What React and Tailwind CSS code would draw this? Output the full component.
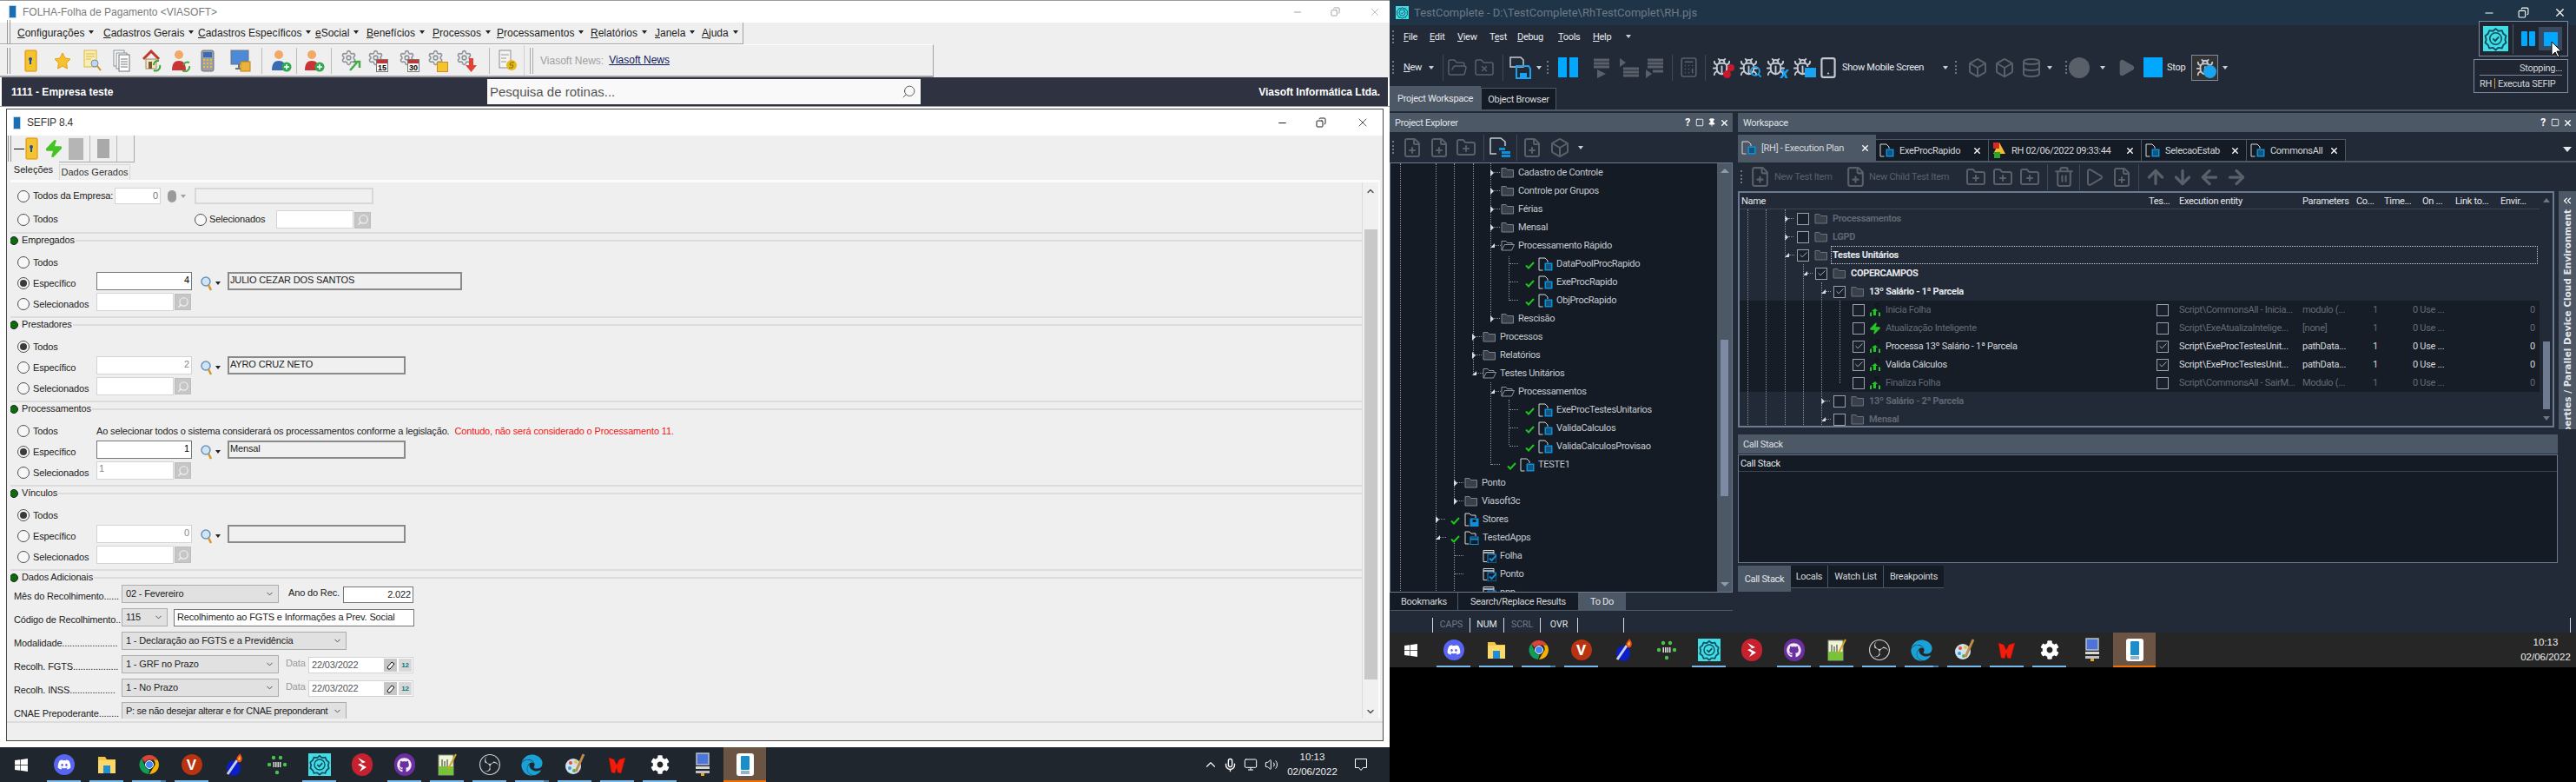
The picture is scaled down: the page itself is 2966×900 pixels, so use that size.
import React from 'react'
import { FaWindows, FaDiscord, FaGithub, FaCog, FaEdge } from 'react-icons/fa'
import { SiObsstudio } from 'react-icons/si'
import {
  FolderOpen, FolderX, Play, Calculator, Bug, Smartphone, Box, Database, Trash2, ArrowUp, ArrowDown, ArrowLeft, ArrowRight,
  Search, Mic, Volume2, ChevronUp, ChevronDown, ChevronsLeft, X, Minus, Copy, Square, Pin, Zap, Settings, Check, FilePlus, FolderPlus, Monitor,
} from 'lucide-react'

const leftFont = "[font-family:'Liberation_Sans',sans-serif]"
const rightFont = "[font-family:'Roboto',sans-serif]"

// ---------- left window bits

function Door() {
  return (
    <svg width="16" height="26" viewBox="0 0 16 26">
      <rect x="1" y="1" width="13" height="24" rx="1" fill="#f4c430" stroke="#e08a00" />
      <circle cx="7" cy="11" r="2" fill="#1c4fa0" />
      <rect x="6" y="11" width="2" height="6" fill="#1c4fa0" />
    </svg>
  )
}

function Star() {
  return (
    <svg width="20" height="20" viewBox="0 0 20 20">
      <path d="M10 1l3 6 6 1-4.500 4.500 1 6.500-5.500-3-5.500 3 1-6.500L1 8l6-1z" fill="#f6c229" stroke="#e89a10" />
    </svg>
  )
}

function DocSearch() {
  return (
    <svg width="22" height="26" viewBox="0 0 22 26">
      <rect x="1" y="1" width="14" height="19" fill="#f9efb0" stroke="#d9b84a" />
      <path d="M3 5h10M3 8h10M3 11h6" stroke="#d9b84a" />
      <circle cx="13" cy="16" r="4" fill="#bcd8f2" stroke="#7c8da0" />
      <path d="M16 19l4 5" stroke="#d08a20" strokeWidth="2" />
    </svg>
  )
}

function Docs() {
  return (
    <svg width="20" height="26" viewBox="0 0 20 26">
      <rect x="1" y="1" width="12" height="18" fill="#fff" stroke="#8a8f96" />
      <rect x="4" y="4" width="12" height="18" fill="#fff" stroke="#8a8f96" />
      <rect x="7" y="6" width="12" height="19" fill="#fff" stroke="#6f747a" />
      <path d="M9 11h8M9 14h8M9 17h8M9 20h8" stroke="#777" />
    </svg>
  )
}

function House() {
  return (
    <svg width="22" height="26" viewBox="0 0 22 26">
      <path d="M1 11L10 2l9 9" fill="none" stroke="#c0392b" strokeWidth="3" />
      <rect x="4" y="11" width="12" height="11" fill="#f3e4c4" stroke="#a08a60" />
      <rect x="7" y="14" width="4" height="8" fill="#7a5a2c" />
      <path d="M13 24a5 5 0 0 0 7-6M19 13a5 5 0 0 0-6 5" fill="none" stroke="#36a836" strokeWidth="2" />
    </svg>
  )
}

function Person({ badge }) {
  return (
    <svg width="24" height="26" viewBox="0 0 24 26">
      <circle cx="9" cy="6" r="5" fill="#f2a866" />
      <path d="M1 24c0-8 3-11 8-11s8 3 8 11z" fill={badge === 'blue' ? '#3c6ab0' : '#c93333'} />
      {badge === 'swap' && <path d="M13 24a5 5 0 0 0 8-5M21 15a5 5 0 0 0-7 3" fill="none" stroke="#4ca83c" strokeWidth="2" />}
      {badge && badge !== 'swap' && <circle cx="18" cy="20" r="5.500" fill="#2fa84f" />}
      {badge && badge !== 'swap' && <path d="M18 17v6M15 20h6" stroke="#fff" strokeWidth="1.500" />}
    </svg>
  )
}

function Calc() {
  return (
    <svg width="16" height="26" viewBox="0 0 16 26">
      <rect x="1" y="1" width="14" height="24" rx="2" fill="#9aa0a8" stroke="#6c727a" />
      <rect x="3" y="3" width="10" height="6" fill="#3c6ab0" />
      <path d="M3 12h2M7 12h2M11 12h2M3 16h2M7 16h2M11 16h2M3 20h2M7 20h2M11 20h2" stroke="#f0b93a" strokeWidth="2" />
    </svg>
  )
}

function ScreenLock() {
  return (
    <svg width="24" height="26" viewBox="0 0 24 26">
      <rect x="1" y="1" width="20" height="16" fill="#4c8ad8" stroke="#6c727a" />
      <path d="M6 22h8M10 17v5" stroke="#6c727a" strokeWidth="2" />
      <rect x="12" y="14" width="11" height="11" fill="#eeb23a" stroke="#b98318" />
    </svg>
  )
}

function GearBadge({ children }) {
  return (
    <div className="relative w-[24px] h-[26px]">
      <Settings size={19} strokeWidth={2} className="text-[#8e949b] absolute left-0 top-0" />
      <div className="absolute right-0 bottom-0">{children}</div>
    </div>
  )
}

function Cal({ n }) {
  return (
    <div className="w-[14px] h-[15px] bg-white border border-[#777] flex flex-col items-center">
      <div className="w-full h-[4px] bg-[#c93333] shrink-0" />
      <span className="text-[9px] leading-[10px] font-bold text-black">{n}</span>
    </div>
  )
}

function Radio({ on }) {
  return (
    <span className="w-[14px] h-[14px] rounded-full border border-[#4d4d4d] bg-[#f8f8f8] flex items-center justify-center shrink-0">
      {on && <span className="w-[8px] h-[8px] rounded-full bg-[#3a3a3a]" />}
    </span>
  )
}

function Loupe() {
  return (
    <div className="w-[27px] flex items-center shrink-0 gap-[3px] ml-[6px]">
      <svg width="14" height="18" viewBox="0 0 14 18">
        <circle cx="6" cy="7" r="5" fill="#cfe4f7" stroke="#6d93b8" strokeWidth="1.500" />
        <path d="M9 11l3 6" stroke="#d3972a" strokeWidth="2.500" />
      </svg>
      <span className="w-0 h-0 border-l-[3px] border-r-[3px] border-t-[4px] border-l-transparent border-r-transparent border-t-[#222]" />
    </div>
  )
}

function PickBtn() {
  return (
    <div className="w-[19px] h-[19px] bg-[#c6c6c6] border border-[#bdbdbd] flex items-center justify-center ml-[1px] mt-[1px]">
      <Search size={14} className="text-[#f2f2f2] -scale-x-100" />
    </div>
  )
}

function Label({ children }) {
  return <span className="text-[#222] whitespace-nowrap w-[69px] shrink-0">{children}</span>
}

function NumInput({ value, active }) {
  return (
    <div className={'w-[110px] h-[21px] bg-white border text-right pr-[2px] leading-[17px] -mt-[1px] self-start shrink-0 ' + (active ? 'border-[#777] text-black' : 'border-[#d4d4d4] text-[#888]')}>
      {value}
    </div>
  )
}

function OptionGroup({ title, todos, esp, name, nameW, active, message, selValue }) {
  return (
    <div className="h-[97px] border-t-2 border-[#dcdcdc]">
      <SectionHead title={title} />
      <div className="h-[6px]" />
      <div className="h-6 pl-2 flex items-center gap-1">
        <Radio on={todos} />
        <Label>Todos</Label>
        {message && (
          <span className="whitespace-nowrap text-[#222]">
            Ao selecionar todos o sistema considerará os processamentos conforme a legislação.
            <span className="text-[#f01414] ml-[6px]">Contudo, não será considerado o Processamento 11.</span>
          </span>
        )}
      </div>
      <div className="h-6 pl-2 flex items-center gap-1">
        <Radio on={!todos} />
        <Label>Específico</Label>
        <NumInput value={esp} active={active} />
        <Loupe />
        <div className={'h-[21px] border-2 border-[#8a8a8a] self-start -mt-[1px] pl-[1px] leading-[15px] text-[#222] bg-[#f0f0f0] ' + nameW}>{name}</div>
      </div>
      <div className="h-6 pl-2 flex items-center gap-1">
        <Radio />
        <Label>Selecionados</Label>
        <div className="w-[89px] h-[21px] bg-white border border-[#d4d4d4] -mt-[1px] self-start pl-[2px] leading-[15px] text-[#888]">{selValue}</div>
        <div className="self-start -ml-1 -mt-[1px]"><PickBtn /></div>
      </div>
    </div>
  )
}

function SectionHead({ title }) {
  return (
    <div className="h-[15px] flex items-center -ml-[1px]">
      <span className="w-[10px] h-[10px] rounded-full bg-[#0d6b0d] border border-[#222] shrink-0" />
      <span className="ml-[4px] text-[#222] whitespace-nowrap">{title}</span>
      <div className="h-[2px] bg-[#dcdcdc] flex-1 ml-[1px]" />
    </div>
  )
}

function Select({ w, tight, children }) {
  return (
    <div className={'h-[21px] bg-[#e1e1e1] border border-[#adadad] flex items-center pl-[4px] pr-[4px] justify-between shrink-0 text-[#222] ' + w}>
      <span className={'whitespace-nowrap ' + (tight ? 'tracking-[-0.3px]' : '')}>{children}</span>
      <ChevronDown size={11} className="text-[#444] shrink-0 ml-[2px]" />
    </div>
  )
}

function DataRow({ label, children }) {
  return (
    <div className="h-[27px] flex items-start pl-[4px]">
      <span className="w-[124px] shrink-0 whitespace-nowrap text-[#222] mt-[8px]">{label}</span>
      {children}
    </div>
  )
}

function DateField() {
  return (
    <>
      <span className="ml-[8px] w-[26px] shrink-0 text-[#9a9a9a] mt-[4px]">Data</span>
      <div className="w-[121px] h-[19px] bg-white border border-[#d4d4d4] mt-[2px] flex items-center pl-[3px] text-[#555]">
        <span className="flex-1">22/03/2022</span>
        <span className="w-[15px] h-[15px] bg-[#c6c6c6] flex items-center justify-center mr-[2px]">
          <svg width="10" height="10" viewBox="0 0 10 10"><path d="M1 7l5-6 3 2-5 6H2z" fill="#fff" stroke="#111" /></svg>
        </span>
        <span className="w-[15px] h-[15px] bg-[#d8d8d8] flex items-center justify-center text-[8px] text-[#0a7a7a] font-bold mr-[1px]">12</span>
      </div>
    </>
  )
}

function MenuArrow() {
  return <span className="inline-block ml-[5px] mb-[3px] w-0 h-0 border-l-[3px] border-r-[3px] border-t-[4px] border-l-transparent border-r-transparent border-t-[#222]" />
}

const mainMenu = [
  ['C', 'onfigurações', 'w-[99px]'],
  ['C', 'adastros Gerais', 'w-[109px]'],
  ['C', 'adastros Específicos', 'w-[135px]'],
  ['e', 'Social', 'w-[59px]'],
  ['B', 'enefícios', 'w-[76px]'],
  ['P', 'rocessos', 'w-[74px]'],
  ['P', 'rocessamentos', 'w-[108px]'],
  ['R', 'elatórios', 'w-[74px]'],
  ['J', 'anela', 'w-[54px]'],
  ['A', 'juda', 'w-[46px]'],
]

function Grip({ light }) {
  return (
    <div className="flex gap-[1px] h-[30px] shrink-0">
      <span className={'w-[2px] h-full border-l ' + (light ? 'border-[#aaa]' : 'border-[#999]')} />
      <span className={'w-[2px] h-full border-l ' + (light ? 'border-[#aaa]' : 'border-[#999]')} />
    </div>
  )
}

function ToolSep() {
  return <span className="w-px h-[30px] bg-[#bbb] shrink-0 block" />
}

function TaskIcon({ under, active, split, children }) {
  return (
    <div className={'w-[49px] h-full relative flex items-center justify-center shrink-0 ' + (active ? 'bg-[#6b5443]' : '')}>
      {children}
      {under && <span className="absolute left-[5px] right-[5px] bottom-0 h-[2px] bg-[#76b9ed]" />}
      {split && <span className="absolute right-[5px] bottom-0 w-[6px] h-[2px] bg-[#4a7ea6]" />}
      {active && <span className="absolute left-0 right-0 bottom-0 h-[2px] bg-[#f07000]" />}
    </div>
  )
}

function TcLogo({ size }) {
  return (
    <svg width={size} height={size} viewBox="0 0 28 28" className="shrink-0">
      <rect width="28" height="28" fill="#3fdde6" />
      <path d="M14 3l3 2.500 4-.5 1.500 3.500 3 2.500-1 4 1 3.500-3 2.500-1.500 3.500-4-.5-3 2.500-3-2.500-4 .5L5.500 21l-3-2.500 1-3.500-1-4 3-2.500L7 5l4 .5z" fill="none" stroke="#0f4a5a" strokeWidth="1.800" />
      <circle cx="14" cy="14" r="6.500" fill="none" stroke="#0f4a5a" strokeWidth="1.500" />
      <path d="M11 14l2.500 2.500L17.500 12" fill="none" stroke="#0f4a5a" strokeWidth="1.800" />
    </svg>
  )
}

function TaskbarIcons() {
  return (
    <>
      <TaskIcon><FaWindows size={17} className="text-white" /></TaskIcon>
      <TaskIcon under>
        <span className="w-[24px] h-[24px] rounded-full bg-[#5865f2] flex items-center justify-center"><FaDiscord size={16} className="text-white" /></span>
      </TaskIcon>
      <TaskIcon under>
        <svg width="22" height="24" viewBox="0 0 22 24">
          <path d="M1 3h8l2 3h10v16H1z" fill="#f5c342" />
          <rect x="1" y="7" width="20" height="15" fill="#fbd867" />
          <rect x="7" y="13" width="8" height="9" fill="#1f8fd8" />
        </svg>
      </TaskIcon>
      <TaskIcon under split>
        <svg width="24" height="24" viewBox="0 0 24 24">
          <path d="M12 1a11 11 0 0 1 9.500 5.500H12a5.500 5.500 0 0 0-5 3L3.200 4.800A11 11 0 0 1 12 1z" fill="#db4437" />
          <path d="M21.500 6.500A11 11 0 0 1 12 23l4.700-8a5.500 5.500 0 0 0 0-8.500z" fill="#f4b400" />
          <path d="M3.200 4.800L7.500 15a5.500 5.500 0 0 0 5 2.500L11 23A11 11 0 0 1 3.200 4.800z" fill="#0f9d58" />
          <circle cx="12" cy="12" r="4.500" fill="#4285f4" stroke="#fff" />
        </svg>
      </TaskIcon>
      <TaskIcon under>
        <span className="w-[24px] h-[24px] rounded-full bg-[#b8330f] flex items-center justify-center text-white font-bold text-[17px] leading-none">V</span>
      </TaskIcon>
      <TaskIcon>
        <svg width="24" height="26" viewBox="0 0 24 26">
          <ellipse cx="11" cy="17" rx="8" ry="9" fill="#0a1fc9" />
          <path d="M4 24L15 8" stroke="#c9d1e6" strokeWidth="3" />
          <path d="M15 8c-2-4 2-5 3-8 2 3 4 5 2 9-1 2-4 2-5-1z" fill="#f04a1c" />
          <path d="M16 7c0-2 2-3 2-4 1 2 1 4 0 5z" fill="#fbd03c" />
        </svg>
      </TaskIcon>
      <TaskIcon>
        <svg width="24" height="24" viewBox="0 0 24 24">
          <circle cx="8" cy="4" r="2.200" fill="#4ac14a" />
          <circle cx="16" cy="4" r="2.200" fill="#4ac14a" />
          <circle cx="3" cy="12" r="2.200" fill="#4ac14a" />
          <circle cx="21" cy="12" r="2.200" fill="#4ac14a" />
          <circle cx="12" cy="21" r="2.200" fill="#4ac14a" />
          <rect x="7.500" y="9" width="9" height="6" fill="#d9d9d9" />
          <path d="M9.500 9v6M12 9v6M14.500 9v6" stroke="#333" />
        </svg>
      </TaskIcon>
      <TaskIcon under><TcLogo size={26} /></TaskIcon>
      <TaskIcon>
        <span className="w-[24px] h-[26px] rounded-full bg-[#c7202f] flex items-center justify-center">
          <svg width="14" height="20" viewBox="0 0 14 20"><path d="M2 2l9 5-6 2 7 4-8 5 3-5-5-3 5-2z" fill="#fff" /></svg>
        </span>
      </TaskIcon>
      <TaskIcon under>
        <span className="w-[24px] h-[26px] rounded-full bg-[#6b2fa0] flex items-center justify-center"><FaGithub size={17} className="text-[#f2eaf8]" /></span>
      </TaskIcon>
      <TaskIcon under>
        <svg width="22" height="26" viewBox="0 0 22 26">
          <rect x="1" y="2" width="17" height="23" fill="#eef4d6" stroke="#8a8f7a" />
          <rect x="1" y="15" width="17" height="10" fill="#77c43a" />
          <path d="M5 7v8M8 9v6M11 7v8" stroke="#333" />
          <path d="M21 1L12 18" stroke="#d3a52a" strokeWidth="2" />
        </svg>
      </TaskIcon>
      <TaskIcon under><SiObsstudio size={24} className="text-[#d4d4d4]" /></TaskIcon>
      <TaskIcon under split><FaEdge size={25} className="text-[#1aa2d8]" /></TaskIcon>
      <TaskIcon under>
        <svg width="24" height="26" viewBox="0 0 24 26">
          <ellipse cx="10" cy="15" rx="9" ry="9" fill="#cfe2ee" />
          <circle cx="7" cy="11" r="2" fill="#e64b3c" />
          <circle cx="13" cy="10" r="2" fill="#f0c030" />
          <circle cx="6" cy="17" r="2" fill="#3a9ad9" />
          <circle cx="11" cy="20" r="2" fill="#4cb050" />
          <path d="M22 1L13 21" stroke="#c08a4a" strokeWidth="3" />
        </svg>
      </TaskIcon>
      <TaskIcon under>
        <svg width="24" height="24" viewBox="0 0 24 24"><path d="M2 4l6 2 3 6 3-6 7-2-5 18-4-1-1-5-2 6-4-1z" fill="#f01c0c" stroke="#a50d05" strokeWidth=".5" /></svg>
      </TaskIcon>
      <TaskIcon under><FaCog size={22} className="text-white" /></TaskIcon>
      <TaskIcon>
        <svg width="20" height="28" viewBox="0 0 20 28">
          <rect x="3" y="1" width="14" height="13" fill="#4d74d8" stroke="#b8c0cc" strokeWidth="1.500" />
          <rect x="2" y="16" width="16" height="3" fill="#d8d8d8" />
          <rect x="2" y="21" width="16" height="3" fill="#c0c0c0" />
          <rect x="8" y="24" width="4" height="3" fill="#e9a721" />
        </svg>
      </TaskIcon>
      <TaskIcon active>
        <span className="w-[20px] h-[26px] rounded-[3px] bg-white flex flex-col items-center justify-center">
          <span className="w-[10px] h-[16px] bg-[#1b8ec9] rounded-[1px]" />
          <span className="w-[10px] h-[4px] bg-[#8fb5cf] mt-[1px]" />
        </span>
      </TaskIcon>
    </>
  )
}

function LeftWindow() {
  return (
    <div className={'w-[1600px] h-[900px] bg-white flex flex-col shrink-0 text-[11px] leading-none tracking-[-0.15px] ' + leftFont}>
      {/* main title */}
      <div className="h-[26px] border-t border-[#9a9a9a] flex items-center shrink-0 pl-[10px] pr-[10px] tracking-normal">
        <span className="w-[9px] h-[15px] bg-[#1b6fb0] border border-[#b5d6ea] rounded-[1px] shrink-0" />
        <span className="ml-[7px] text-[12px] text-[#7a7a7a]">FOLHA-Folha de Pagamento &lt;VIASOFT&gt;</span>
        <div className="ml-auto flex items-center text-[#a0a0a0]">
          <Minus size={12} className="mr-[32px]" />
          <Copy size={11} className="mr-[33px] -scale-x-100" />
          <X size={14} strokeWidth={1.2} />
        </div>
      </div>

      <div className="h-[25px] bg-[#efefef] shrink-0 flex tracking-normal">
        <div className="w-[856px] h-full border-b border-r border-[#a3a3a3] flex items-center pl-[8px]">
          <Grip />
          <div className="flex items-center ml-[7px] text-[12px] text-[#222]">
            {mainMenu.map(m => (
              <span key={m[1]} className={'whitespace-nowrap shrink-0 ' + m[2]}>
                <span className="underline">{m[0]}</span>{m[1]}<MenuArrow />
              </span>
            ))}
          </div>
        </div>
      </div>

      <div className="h-[38px] bg-[#efefef] shrink-0 flex tracking-normal">
        <div className="w-[1075px] h-full border-t border-white border-b-2 border-b-[#a3a3a3] border-r border-r-[#a3a3a3] flex items-center pl-[8px]">
          <Grip />
          <div className="w-[15px]" />
          <div className="flex items-center">
            <div className="w-[34px]"><Door /></div>
            <div className="w-[34px]"><Star /></div>
            <div className="w-[34px]"><DocSearch /></div>
            <div className="w-[34px]"><Docs /></div>
            <div className="w-[33px]"><House /></div>
            <div className="w-[34px]"><Person badge="swap" /></div>
            <div className="w-[34px]"><Calc /></div>
            <div className="w-[26px]"><ScreenLock /></div>
            <div className="w-[10px]" />
            <ToolSep />
            <div className="w-[39px] pl-[10px]"><Person badge="blue" /></div>
            <ToolSep />
            <div className="w-[39px] pl-[8px]"><Person badge="red" /></div>
            <ToolSep />
            <div className="w-[33px] pl-[10px]"><GearBadge><svg width="14" height="14" viewBox="0 0 14 14"><path d="M1 12L9 3M5 2h7v7" fill="none" stroke="#4aa84a" strokeWidth="2.500" /></svg></GearBadge></div>
            <div className="w-[36px] pl-[8px]"><GearBadge><Cal n="15" /></GearBadge></div>
            <div className="w-[34px] pl-[8px]"><GearBadge><Cal n="30" /></GearBadge></div>
            <div className="w-[34px] pl-[7px]"><GearBadge><span className="block w-[13px] h-[12px] bg-[#f4c430] border border-[#d08a20]" /></GearBadge></div>
            <div className="w-[33px] pl-[6px]"><GearBadge><svg width="13" height="16" viewBox="0 0 13 16"><path d="M4 0h5v8h4l-6.500 8L0 8h4z" fill="#e14334" /></svg></GearBadge></div>
            <div className="w-[11px]" />
            <ToolSep />
            <div className="w-[39px] pl-[10px]">
              <svg width="22" height="26" viewBox="0 0 22 26">
                <rect x="1" y="1" width="13" height="20" fill="#f4f4f4" stroke="#8a8f96" />
                <path d="M3 6h9M3 10h6M3 14h6" stroke="#999" />
                <circle cx="15" cy="18" r="6" fill="#e4bb1a" />
                <path d="M18 15h-4l-1 3h4l-1 3h-4" fill="none" stroke="#8a6a00" />
              </svg>
            </div>
          </div>
          <span className="w-[2px] h-full border-l border-[#d0d0d0]" />
          <div className="ml-[5px]"><Grip light /></div>
          <span className="ml-[7px] text-[12px] text-[#a0a0a0]">Viasoft News:</span>
          <span className="ml-[6px] text-[12px] underline text-[#0c1a5c] -mt-[2px]">Viasoft News</span>
        </div>
      </div>

      {/* company bar */}
      <div className="h-[33px] mx-[2px] bg-[#2f3341] shrink-0 flex items-center relative pl-[11px] pr-[9px] text-white font-bold text-[12px] tracking-normal">
        <span className="w-[548px] shrink-0">1111 - Empresa teste</span>
        <div className="w-[499px] h-[29px] bg-[#f9f9f9] flex items-center px-[3px] justify-between shrink-0">
          <span className="text-[15px] font-normal text-[#555]">Pesquisa de rotinas...</span>
          <Search size={17} strokeWidth={1.200} className="text-[#444] mr-[2px] -scale-x-100" />
        </div>
        <span className="ml-auto">Viasoft Informática Ltda.</span>
      </div>
      <div className="h-[3px] shrink-0 border-t border-[#999]" />

      {/* SEFIP child window */}
      <div className="w-[1586px] h-[728px] ml-[7px] border border-[#4a4a4a] shrink-0 flex flex-col bg-[#efefef]">
        <div className="h-[30px] bg-white flex items-center shrink-0 pl-[7px] pr-[15px]">
          <span className="w-[9px] h-[15px] bg-[#1b6fb0] border border-[#b5d6ea] rounded-[1px] shrink-0" />
          <span className="ml-[7px] text-[12px] text-[#333]">SEFIP 8.4</span>
          <div className="ml-auto flex items-center text-[#222]">
            <Minus size={13} className="mr-[32px]" />
            <Copy size={12} className="mr-[34px] -scale-x-100" />
            <X size={16} strokeWidth={1.200} />
          </div>
        </div>

        {/* form toolbar */}
        <div className="h-[31px] w-[146px] ml-[1px] shrink-0 border-r border-b border-[#a9a9a9] flex items-center">
          <Grip />
          <span className="ml-[2px] w-[12px] h-[6px] border-t border-[#111] mt-[6px]" />
          <div className="ml-[1px]"><Door /></div>
          <Zap size={22} className="ml-[6px] text-[#43c423] fill-[#43c423]" />
          <div className="ml-[6px] w-[17px] h-[25px] bg-[#b5b5b5]" />
          <div className="ml-[7px]"><ToolSep /></div>
          <div className="ml-[8px] w-[14px] h-[22px] bg-[#a9a9a9]" />
          <span className="ml-[8px]"><ToolSep /></span>
        </div>

        {/* tabs */}
        <div className="h-[20px] shrink-0 flex items-end pl-[1px] tracking-normal">
          <div className="w-[59px] h-[21px] bg-[#f0f0f0] flex items-center justify-center text-[#222] pb-[2px] whitespace-nowrap">Seleções</div>
          <div className="w-[82px] h-[18px] border border-b-0 border-[#d8d8d8] flex items-center justify-center text-[#333] whitespace-nowrap">Dados Gerados</div>
        </div>

        {/* frame */}
        <div className="flex-1 min-h-0 mr-[3px] ml-[4px] border-t-[3px] border-t-[#fbfbfb] border-r-2 border-r-[#fbfbfb] flex overflow-hidden">
          <div className="flex-1 min-w-0 flex flex-col bg-[#efefef]">
            <div className="h-[619px] overflow-hidden">
              <div className="h-[57px] pt-[3px]">
                <div className="h-[25px] pl-2 flex items-center gap-1">
                  <Radio />
                  <span className="text-[#222] w-[90px] shrink-0 whitespace-nowrap">Todos da Empresa:</span>
                  <div className="w-[53px] h-[19px] bg-white border border-[#d4d4d4] text-right pr-[2px] leading-[17px] text-[#777] shrink-0">0</div>
                  <div className="ml-[4px] w-[27px] flex items-center gap-[5px]">
                    <span className="w-[10px] h-[14px] bg-[#9a9a9a] rounded-[5px]" />
                    <span className="w-0 h-0 border-l-[3px] border-r-[3px] border-t-[4px] border-l-transparent border-r-transparent border-t-[#a0a0a0]" />
                  </div>
                  <div className="w-[206px] h-[19px] border-2 border-[#d8d8d8] bg-[#f0f0f0]" />
                </div>
                <div className="h-[25px] mt-[2px] pl-2 flex items-center">
                  <Radio />
                  <span className="ml-1 text-[#222] w-[186px] shrink-0">Todos</span>
                  <Radio />
                  <span className="ml-[3px] text-[#222] w-[77px] shrink-0">Selecionados</span>
                  <div className="w-[89px] h-[21px] bg-white border border-[#d4d4d4]" />
                  <PickBtn />
                </div>
              </div>

              <OptionGroup title="Empregados" todos={false} esp="4" active name="JULIO CEZAR DOS SANTOS" nameW="w-[270px]" />
              <OptionGroup title="Prestadores" todos esp="2" name="AYRO CRUZ NETO" nameW="w-[205px]" />
              <OptionGroup title="Processamentos" todos={false} esp="1" active message name="Mensal" nameW="w-[205px]" selValue="1" />
              <OptionGroup title="Vínculos" todos esp="0" name="" nameW="w-[205px]" />

              <div className="border-t-2 border-[#dcdcdc]">
                <SectionHead title="Dados Adicionais" />
                <div className="h-px" />
                <DataRow label="Mês do Recolhimento......">
                  <Select w="w-[181px]">02 - Fevereiro</Select>
                  <span className="ml-[11px] w-[63px] shrink-0 text-[#222] mt-[4px] whitespace-nowrap">Ano do Rec.</span>
                  <div className="w-[81px] h-[19px] bg-white border border-[#777] mt-[2px] text-right pr-[2px] leading-[17px] text-[#222]">2.022</div>
                </DataRow>
                <DataRow label="Código de Recolhimento..">
                  <Select w="w-[53px]">115</Select>
                  <div className="ml-[7px] w-[277px] h-[20px] bg-white border border-[#777] mt-[1px] pl-[3px] leading-[17px] text-[#222] whitespace-nowrap">Recolhimento ao FGTS e Informações a Prev. Social</div>
                </DataRow>
                <DataRow label="Modalidade......................">
                  <Select w="w-[259px]">1 - Declaração ao FGTS e a Previdência</Select>
                </DataRow>
                <DataRow label="Recolh. FGTS..................">
                  <Select w="w-[181px]">1 - GRF no Prazo</Select>
                  <DateField />
                </DataRow>
                <DataRow label="Recolh. INSS..................">
                  <Select w="w-[181px]">1 - No Prazo</Select>
                  <DateField />
                </DataRow>
                <DataRow label="CNAE Prepoderante........">
                  <Select w="w-[259px]" tight>P: se não desejar alterar e for CNAE preponderant</Select>
                </DataRow>
              </div>
            </div>
          </div>
          <div className="w-[19px] border-l border-[#dcdcdc] flex flex-col items-center shrink-0 bg-[#f0f0f0]">
            <div className="h-[54px] w-full flex justify-center pt-[4px]"><ChevronUp size={12} strokeWidth={3} className="text-[#555]" /></div>
            <div className="w-[15px] h-[518px] bg-[#c8c8c8]" />
            <div className="flex-1 w-full flex items-end justify-center pb-[2px]"><ChevronDown size={12} strokeWidth={3} className="text-[#555]" /></div>
          </div>
        </div>
        <div className="h-[22px] shrink-0 border-t-2 border-[#dcdcdc] bg-[#efefef] mt-[3px]" />
      </div>
      <div className="flex-1" />

      {/* taskbar left */}
      <div className="h-[40px] shrink-0 bg-[#1f262e] flex items-center text-white pr-[25px] tracking-normal">
        <TaskbarIcons />
        <div className="ml-auto flex items-center h-full">
          <ChevronUp size={18} strokeWidth={1.500} className="mr-[5px]" />
          <Mic size={17} className="mr-[7px]" />
          <Monitor size={16} strokeWidth={1.500} className="mr-[8px]" />
          <Volume2 size={16} strokeWidth={1.500} />
          <div className="w-[58px] ml-[10px] flex flex-col items-center gap-[6px] text-[11.5px] text-[#eee]">
            <span>10:13</span>
            <span>02/06/2022</span>
          </div>
          <svg width="16" height="16" viewBox="0 0 16 16" className="ml-[19px]"><path d="M1.500 1.500h13v10h-4L8 14.500 5.500 11.500h-4z" fill="none" stroke="#fff" /></svg>
        </div>
      </div>
    </div>
  )
}

// ---------- right window bits

function DarkArrow() {
  return <span className="block w-0 h-0 border-l-[3px] border-r-[3px] border-t-[4px] border-l-transparent border-r-transparent border-t-[#c9ced6]" />
}

function DarkGrip() {
  return <span className="block h-[15px] w-0 border-l-2 border-dotted border-[#6e7682] shrink-0" />
}

function DarkSep() {
  return <span className="block w-px h-[30px] bg-[#3f4756] shrink-0" />
}

function FolderIco({ open, lines }) {
  return (
    <svg width="16" height="13" viewBox="0 0 16 13" className="shrink-0">
      {open
        ? <path d="M1 12V1.500h5l1.500 2H13v2H4.500L1 12h11.500L15.500 5.500H4.500" fill="none" stroke={lines || '#8e949d'} />
        : <path d="M1 12V1.500h5l1.500 2h7V12z" fill="#3a4049" stroke={lines || '#7d838c'} />}
    </svg>
  )
}

function GreenCheck() {
  return (
    <svg width="11" height="9" viewBox="0 0 11 9" className="shrink-0 mt-[3px]">
      <path d="M1 4.500l3 3L10 1" fill="none" stroke="#1fc41f" strokeWidth="2" />
    </svg>
  )
}

function FileIco() {
  return (
    <svg width="17" height="16" viewBox="0 0 17 16" className="shrink-0">
      <path d="M5.500 15H1V1h7l3 3v2" fill="none" stroke="#d5d8dc" />
      <rect x="7.500" y="6.500" width="9" height="9" fill="#0e8fd8" />
      <path d="M9 9h6M9 11h6M9 13h6" stroke="#141b24" />
    </svg>
  )
}

function StoreIco({ kind }) {
  return (
    <svg width="17" height="16" viewBox="0 0 17 16" className="shrink-0">
      <path d="M5.500 15H1V1h5l2 2h5v3" fill="none" stroke="#d5d8dc" />
      <rect x="7" y="7" width="9" height="8.500" fill={kind === 'stores' ? '#0e8fd8' : 'none'} stroke="#0e8fd8" />
      {kind === 'apps' && <path d="M7 9.500h9" stroke="#0e8fd8" strokeWidth="2" />}
      {kind === 'stores' && <rect x="9.500" y="8" width="4" height="3" fill="#141b24" />}
    </svg>
  )
}

function AppIco() {
  return (
    <svg width="16" height="16" viewBox="0 0 16 16" className="shrink-0">
      <path d="M5 14.500H1v-13h12v5" fill="none" stroke="#d5d8dc" />
      <path d="M1 4h12" stroke="#d5d8dc" strokeWidth="1.500" />
      <rect x="6" y="6" width="10" height="10" fill="none" stroke="#0e8fd8" />
      <path d="M8 10.500l2.500 2.500L16 7" fill="none" stroke="#0e8fd8" strokeWidth="2" />
    </svg>
  )
}

function Expander({ open }) {
  if (open) return <span className="block w-0 h-0 border-b-[5px] border-l-[5px] border-l-transparent border-b-[#d9dce0] shrink-0" />
  return <span className="block w-0 h-0 border-y-[4px] border-l-[4px] border-y-transparent border-l-[#d9dce0] shrink-0" />
}

function Dots({ w }) {
  return <span className={'block border-t border-dotted border-[#8b919a] shrink-0 ' + w} />
}

// x offsets are relative to the tree panel left edge (1600)
const treeRows = [
  { x: 115, label: 'Cadastro de Controle', t: 'folder' },
  { x: 115, label: 'Controle por Grupos', t: 'folder' },
  { x: 115, label: 'Férias', t: 'folder' },
  { x: 115, label: 'Mensal', t: 'folder' },
  { x: 115, label: 'Processamento Rápido', t: 'open' },
  { x: 155, label: 'DataPoolProcRapido', t: 'file' },
  { x: 155, label: 'ExeProcRapido', t: 'file' },
  { x: 155, label: 'ObjProcRapido', t: 'file' },
  { x: 115, label: 'Rescisão', t: 'folder' },
  { x: 94, label: 'Processos', t: 'folder' },
  { x: 94, label: 'Relatórios', t: 'folder' },
  { x: 94, label: 'Testes Unitários', t: 'open' },
  { x: 115, label: 'Processamentos', t: 'open' },
  { x: 155, label: 'ExeProcTestesUnitarios', t: 'file' },
  { x: 155, label: 'ValidaCalculos', t: 'file' },
  { x: 155, label: 'ValidaCalculosProvisao', t: 'file' },
  { x: 134, label: 'TESTE1', t: 'file' },
  { x: 73, label: 'Ponto', t: 'folder' },
  { x: 73, label: 'Viasoft3c', t: 'folder' },
  { x: 52, label: 'Stores', t: 'stores' },
  { x: 52, label: 'TestedApps', t: 'apps' },
  { x: 106, label: 'Folha', t: 'app' },
  { x: 106, label: 'Ponto', t: 'app' },
  { x: 106, label: 'ppp', t: 'app' },
]

function TreeRow({ row }) {
  const isFolder = row.t === 'folder' || row.t === 'open'
  const hasBox = row.t === 'stores' || row.t === 'apps'
  return (
    <div className="h-[21px] flex items-center text-[#c5cad2] relative" style={{ paddingLeft: row.x }}>
      {row.t === 'file' && <span className="absolute border-t border-dotted border-[#8b919a] w-[10px]" style={{ left: row.x - 18 }} />}
      {row.t === 'app' && <span className="absolute border-t border-dotted border-[#8b919a] w-[10px]" style={{ left: row.x - 32 }} />}
      {isFolder && <span className="w-[12px] flex items-center"><Expander open={row.t === 'open'} /><Dots w="w-[7px]" /></span>}
      {isFolder && <FolderIco open={row.t === 'open'} />}
      {row.t === 'file' && <span className="w-[15px] flex"><GreenCheck /></span>}
      {row.t === 'file' && <FileIco />}
      {hasBox && <span className="w-[12px] flex items-center"><Expander open={row.t === 'apps'} /><Dots w="w-[7px]" /></span>}
      {hasBox && <span className="w-[21px] flex pl-[5px]"><GreenCheck /></span>}
      {row.t === 'stores' && <StoreIco kind="stores" />}
      {row.t === 'apps' && <StoreIco kind="apps" />}
      {row.t === 'app' && <AppIco />}
      <span className="ml-[4px] whitespace-nowrap">{row.label}</span>
    </div>
  )
}

function Guide({ x, top, h }) {
  return <span className="absolute border-l border-dotted border-[#8b919a]" style={{ left: x, top: top, height: h }} />
}

function PanelHead({ title, w, short }) {
  return (
    <div className={'h-[22px] bg-[#4d5866] flex items-center pl-[6px] pr-[4px] text-[#dde1e6] shrink-0 ' + w}>
      <span>{title}</span>
      <div className="ml-auto flex items-center gap-[4px] text-[#fff]">
        <span className="font-bold text-[12px] mr-[2px]">?</span>
        <Square size={10} />
        {!short && <Pin size={10} fill="#fff" />}
        <X size={11} strokeWidth={3} />
      </div>
    </div>
  )
}

function GrayTool({ children, w }) {
  return <span className={'flex items-center justify-center text-[#5a6069] shrink-0 ' + (w || 'w-[31px]')}>{children}</span>
}

function DarkTab({ children, active, w, icon }) {
  return (
    <div className={(active ? 'bg-[#4d5866] h-[30px] ' : 'bg-[#141b24] h-[25px] border-t border-r border-[#4d5866] ') + 'flex items-center shrink-0 text-[#d5d8dc] pl-[4px] ' + w}>
      {icon}
      <span className="ml-[6px] whitespace-nowrap">{children}</span>
      <X size={11} strokeWidth={3} className="ml-auto mr-[7px] text-white" />
    </div>
  )
}

const gridRows = [
  { d: 0, label: 'Processamentos', open: false, checked: false, strong: false },
  { d: 0, label: 'LGPD', open: false, checked: false, strong: false },
  { d: 0, label: 'Testes Unitários', open: true, checked: true, strong: true, focus: true },
  { d: 1, label: 'COPERCAMPOS', open: true, checked: true, strong: true },
  { d: 2, label: '13º Salário - 1ª Parcela', open: true, checked: true, strong: true },
  { item: true, label: 'Inicia Folha', ent: 'Script\\CommonsAll - Inicia...', par: 'modulo (...' },
  { item: true, zap: true, label: 'Atualização Inteligente', ent: 'Script\\ExeAtualizaIntelige...', par: '[none]' },
  { item: true, on: true, label: 'Processa 13º Salário - 1ª Parcela', ent: 'Script\\ExeProcTestesUnit...', par: 'pathData...' },
  { item: true, on: true, label: 'Valida Cálculos', ent: 'Script\\ExeProcTestesUnit...', par: 'pathData...' },
  { item: true, label: 'Finaliza Folha', ent: 'Script\\CommonsAll - SairM...', par: 'Modulo (...' },
  { d: 2, label: '13º Salário - 2ª Parcela', open: false, checked: false, strong: false },
  { d: 2, label: 'Mensal', open: true, checked: false, strong: false },
]

function CheckBox({ on }) {
  return (
    <span className="w-[14px] h-[14px] border border-[#99a1ad] flex items-center justify-center shrink-0 bg-[#1a212c]">
      {on && <Check size={11} strokeWidth={1.500} className="text-[#e8eaee]" />}
    </span>
  )
}

function ItemIcon({ zap }) {
  if (zap) return <Zap size={14} className="text-[#26c326] fill-[#26c326] shrink-0" />
  return (
    <svg width="14" height="16" viewBox="0 0 14 16" className="shrink-0">
      <circle cx="9" cy="2.500" r="2" fill="none" stroke="#111" />
      <path d="M7 6l3 3H8v5H5V9H3zM1 11l2-1v5H1zM11 10l2 1v4h-2z" fill="#26c326" />
    </svg>
  )
}

function GridRow({ row }) {
  if (row.item) {
    const text = row.on ? 'text-[#d5d8dc]' : 'text-[#646b76]'
    return (
      <div className={'h-[21px] flex items-center bg-[#161d27] ' + text}>
        <div className="w-[471px] shrink-0 flex items-center pl-[130px]">
          <CheckBox on={row.on} />
          <span className="w-[19px] ml-[5px] flex"><ItemIcon zap={row.zap} /></span>
          <span className="whitespace-nowrap">{row.label}</span>
        </div>
        <div className="w-[32px] flex justify-center shrink-0"><CheckBox on={row.on} /></div>
        <span className="w-[145px] pl-[3px] whitespace-nowrap shrink-0">{row.ent}</span>
        <span className="w-[62px] whitespace-nowrap shrink-0">{row.par}</span>
        <span className="w-[30px] text-right pr-[5px] shrink-0">1</span>
        <span className="w-[88px] pl-[35px] whitespace-nowrap shrink-0">0 Use ...</span>
        <span className="flex-1 text-right pr-[5px]">0</span>
      </div>
    )
  }
  return (
    <div className={'h-[21px] flex items-center font-bold relative ' + (row.strong ? 'text-[#e4e7eb]' : 'text-[#5f6671]')} style={{ paddingLeft: 52 + row.d * 21 }}>
      <span className="w-[14px] flex items-center"><Expander open={row.open} /><Dots w="w-[6px]" /></span>
      <CheckBox on={row.checked} />
      <span className="ml-[6px]"><FolderIco lines="#6b727c" /></span>
      <span className="ml-[5px] whitespace-nowrap">{row.label}</span>
      {row.focus && <span className="absolute left-[105px] right-[2px] top-0 bottom-0 border border-dotted border-[#c9ced6]" />}
    </div>
  )
}

function RightWindow() {
  return (
    <div className={'w-[1366px] h-[768px] bg-[#222a38] flex flex-col shrink-0 relative text-[11px] tracking-[-0.3px] leading-none text-[#d5d8dc] ' + rightFont}>
      {/* title */}
      <div className="h-[29px] bg-[#1f3547] flex items-center shrink-0 pl-[7px] tracking-normal">
        <TcLogo size={15} />
        <span className="ml-[6px] text-[13px] text-[#6d7a87]">{'TestComplete - D:\\TestComplete\\RhTestComplet\\RH.pjs'}</span>
        <div className="ml-auto flex items-center text-white">
          <Minus size={14} className="mr-[26px]" />
          <Copy size={13} className="mr-[28px] -scale-x-100" />
          <X size={15} className="mr-[11px]" />
        </div>
      </div>
      {/* menu */}
      <div className="h-[26px] flex items-center shrink-0 pl-[3px] text-[#e4e7eb]">
        <DarkGrip />
        <div className="ml-[11px] flex items-center">
          <span className="w-[30px]"><span className="underline">F</span>ile</span>
          <span className="w-[32px]"><span className="underline">E</span>dit</span>
          <span className="w-[37px]"><span className="underline">V</span>iew</span>
          <span className="w-[32px]">T<span className="underline">e</span>st</span>
          <span className="w-[47px]"><span className="underline">D</span>ebug</span>
          <span className="w-[40px]"><span className="underline">T</span>ools</span>
          <span className="w-[38px]"><span className="underline">H</span>elp</span>
          <DarkArrow />
        </div>
      </div>
      {/* main toolbar */}
      <div className="h-[45px] flex items-center shrink-0 pl-[3px]">
        <DarkGrip />
        <span className="ml-[11px] w-[28px] text-[#e4e7eb]"><span className="underline">N</span>ew</span>
        <span className="ml-[1px]"><DarkArrow /></span>
        <span className="ml-[10px]"><DarkSep /></span>
        <GrayTool><FolderOpen size={24} strokeWidth={1.500} /></GrayTool>
        <GrayTool><FolderX size={24} strokeWidth={1.500} /></GrayTool>
        <span className="ml-[6px]"><DarkSep /></span>
        <GrayTool w="w-[38px]">
          <svg width="26" height="26" viewBox="0 0 26 26">
            <path d="M2 1h12l3 3v8H2z" fill="none" stroke="#c5cad2" strokeWidth="1.500" />
            <path d="M9 11h14l2 3v11H9z" fill="none" stroke="#1aa3f0" strokeWidth="2" />
            <rect x="13" y="19" width="8" height="6" fill="#1aa3f0" />
          </svg>
        </GrayTool>
        <DarkArrow />
        <span className="ml-[6px]"><DarkGrip /></span>
        <div className="ml-[11px] flex gap-[3px]">
          <span className="w-[10px] h-[23px] bg-[#00a8ff]" />
          <span className="w-[10px] h-[23px] bg-[#00a8ff]" />
        </div>
        <div className="ml-[13px] flex items-center">
          <GrayTool w="w-[30px]"><svg width="24" height="24" viewBox="0 0 24 24"><path d="M2 3h18M2 7h18M2 11h18" stroke="#5a6069" strokeWidth="3" /><path d="M6 14l10 5-10 5z" fill="#5a6069" /></svg></GrayTool>
          <GrayTool w="w-[30px]"><svg width="24" height="24" viewBox="0 0 24 24"><path d="M2 1l7 5-7 5z" fill="#5a6069" /><path d="M6 13h18M6 17h18M6 21h18" stroke="#5a6069" strokeWidth="3" /></svg></GrayTool>
          <GrayTool w="w-[30px]"><svg width="24" height="24" viewBox="0 0 24 24"><path d="M4 3h18M4 7h18M4 11h18M10 16h12" stroke="#5a6069" strokeWidth="3" /><path d="M2 14l7 5-7 5z" fill="#5a6069" /></svg></GrayTool>
        </div>
        <span className="ml-[5px]"><DarkSep /></span>
        <GrayTool w="w-[37px]"><Calculator size={25} strokeWidth={1.500} /></GrayTool>
        <DarkSep />
        <div className="flex items-center text-[#c5cad2] ml-[3px]">
          <div className="w-[31px] h-[24px] relative flex items-center justify-center">
            <Bug size={23} />
            <span className="absolute right-[5px] bottom-0 w-[9px] h-[9px] rounded-full bg-[#c9182b]" />
            <span className="absolute right-[1px] top-[8px] w-[8px] h-[8px] rounded-full bg-[#c9182b]" />
          </div>
          <div className="w-[31px] h-[24px] relative flex items-center justify-center">
            <Bug size={23} />
            <Search size={15} strokeWidth={3} className="absolute right-0 bottom-0 text-[#1aa3f0]" />
          </div>
          <div className="w-[31px] h-[24px] relative flex items-center justify-center">
            <Bug size={23} />
            <span className="absolute right-[1px] bottom-[-3px] text-[#1aa3f0] italic font-bold text-[19px]">x</span>
          </div>
          <div className="w-[31px] h-[24px] relative flex items-center justify-center">
            <Bug size={23} />
            <span className="absolute right-0 bottom-0 w-[13px] h-[13px] bg-[#1aa3f0] border-y border-[#222a38]" />
          </div>
          <Smartphone size={26} strokeWidth={2} className="ml-[1px]" />
        </div>
        <span className="ml-[3px] w-[115px] shrink-0 text-[#e4e7eb] whitespace-nowrap">Show Mobile Screen</span>
        <span className="ml-[1px]"><DarkArrow /></span>
        <span className="ml-[8px]"><DarkGrip /></span>
        <div className="ml-[8px] flex items-center">
          <GrayTool><Box size={24} /></GrayTool>
          <GrayTool><Box size={24} /></GrayTool>
          <GrayTool><Database size={24} /></GrayTool>
        </div>
        <span className="ml-[3px]"><DarkArrow /></span>
        <span className="ml-[15px]"><DarkGrip /></span>
        <span className="ml-[2px] w-[24px] h-[24px] rounded-full bg-[#5a6069] shrink-0" />
        <span className="ml-[12px]"><DarkArrow /></span>
        <span className="ml-[13px] text-[#5a6069]"><Play size={22} fill="#5a6069" /></span>
        <span className="ml-[9px] w-[22px] h-[23px] bg-[#00a8ff] shrink-0" />
        <span className="ml-[5px] w-[24px] shrink-0 text-[#e4e7eb]">Stop</span>
        <div className="ml-[4px] w-[31px] h-[30px] border border-[#7b8aa1] bg-[#333] relative flex items-center justify-center text-[#c5cad2] shrink-0">
          <Bug size={22} />
          <span className="absolute right-[1px] bottom-[2px] w-[15px] h-[15px] rounded-full bg-[#1aa3f0]" />
        </div>
        <span className="ml-[5px]"><DarkArrow /></span>
      </div>
      {/* doc tabs */}
      <div className="h-[28px] flex items-end shrink-0 border-b-2 border-[#4d5866]">
        <div className="w-[105px] h-[28px] bg-[#4d5866] flex items-center justify-center text-[#e4e7eb] -mb-[1px]">Project Workspace</div>
        <div className="w-[87px] h-[25px] bg-[#141b24] border border-[#4d5866] border-b-0 flex items-center justify-center">Object Browser</div>
      </div>

      <div className="flex-1 min-h-0 flex pt-[2px]">
        {/* project explorer */}
        <div className="w-[395px] shrink-0 flex flex-col">
          <PanelHead title="Project Explorer" w="w-[395px]" />
          <div className="h-[35px] flex items-center pl-[3px] shrink-0 text-[#5a6069]">
            <DarkGrip />
            <div className="ml-[5px] flex items-center">
              <GrayTool><FilePlus size={24} /></GrayTool>
              <GrayTool><FilePlus size={24} /></GrayTool>
              <GrayTool><FolderPlus size={24} /></GrayTool>
            </div>
            <span className="ml-[5px]"><DarkSep /></span>
            <GrayTool w="w-[37px]">
              <svg width="26" height="25" viewBox="0 0 26 25">
                <path d="M1 2h12l5 4v5M8 20H1V2" fill="none" stroke="#c5cad2" strokeWidth="1.500" />
                <rect x="11" y="13" width="7" height="3" fill="#0e8fd8" />
                <rect x="14" y="17" width="10" height="3" fill="#0e8fd8" />
                <rect x="14" y="21" width="10" height="3" fill="#0e8fd8" />
              </svg>
            </GrayTool>
            <DarkSep />
            <GrayTool w="w-[33px]"><FilePlus size={24} /></GrayTool>
            <GrayTool w="w-[32px]"><Box size={24} /></GrayTool>
            <span className="ml-[5px]"><DarkArrow /></span>
          </div>
          <div className="h-[495px] bg-[#141b24] border border-[#6b7a90] flex overflow-hidden shrink-0 relative">
            <div className="flex-1 min-w-0 overflow-hidden relative">
              <Guide x={11} top={0} h={494} />
              <Guide x={52} top={0} h={494} />
              <Guide x={73} top={0} h={390} />
              <Guide x={73} top={437} h={57} />
              <Guide x={95} top={0} h={242} />
              <Guide x={115} top={0} h={179} />
              <Guide x={115} top={252} h={95} />
              <Guide x={136} top={107} h={51} />
              <Guide x={136} top={272} h={52} />
              {treeRows.map((r, i) => <TreeRow key={i} row={r} />)}
            </div>
            <div className="w-[17px] bg-[#4d5866] shrink-0 flex flex-col items-center relative">
              <span className="mt-[6px] w-0 h-0 border-l-[5px] border-r-[5px] border-b-[5px] border-l-transparent border-r-transparent border-b-[#8e9aad]" />
              <span className="mt-[192px] w-[9px] h-[180px] bg-[#7e8aa3]" />
              <span className="mt-auto mb-[6px] w-0 h-0 border-l-[5px] border-r-[5px] border-t-[5px] border-l-transparent border-r-transparent border-t-[#8e9aad]" />
            </div>
          </div>
          <div className="h-[21px] flex shrink-0 ml-[1px] border-b border-[#4d5866]">
            <div className="w-[78px] bg-[#141b24] border-r border-[#4d5866] flex items-center justify-center">Bookmarks</div>
            <div className="w-[138px] bg-[#141b24] flex items-center justify-center">Search/Replace Results</div>
            <div className="w-[55px] bg-[#4d5866] flex items-center justify-center text-[#e4e7eb]">To Do</div>
          </div>
        </div>

        {/* workspace */}
        <div className="w-[965px] ml-[6px] shrink-0 flex flex-col">
          <PanelHead title="Workspace" w="w-[965px]" short />
          <div className="h-[30px] mt-[5px] flex items-end shrink-0 border-b-2 border-[#4d5866] relative">
            <DarkTab active w="w-[159px]" icon={<FileIco />}>[RH] - Execution Plan</DarkTab>
            <DarkTab w="w-[130px]" icon={<FileIco />}>ExeProcRapido</DarkTab>
            <DarkTab w="w-[176px]" icon={
              <svg width="16" height="20" viewBox="0 0 16 20"><path d="M8 1l7 13H1z" fill="#f2bc2c" /><rect x="1" y="1" width="7" height="7" fill="#d62828" /><rect x="2" y="12" width="7" height="7" fill="#2aa52a" /></svg>
            }>RH 02/06/2022 09:33:44</DarkTab>
            <DarkTab w="w-[121px]" icon={<FileIco />}>SelecaoEstab</DarkTab>
            <DarkTab w="w-[114px]" icon={<FileIco />}>CommonsAll</DarkTab>
            <span className="ml-auto mr-[5px] mb-[10px] w-0 h-0 border-l-[5px] border-r-[5px] border-t-[6px] border-l-transparent border-r-transparent border-t-[#e4e7eb]" />
          </div>
          <div className="h-[33px] flex items-center shrink-0 text-[#5a6069] pl-[3px]">
            <DarkGrip />
            <span className="ml-[8px]"><FilePlus size={25} /></span>
            <span className="ml-[4px] w-[75px] shrink-0 whitespace-nowrap">New Test Item</span>
            <span className="ml-[6px]"><FilePlus size={25} /></span>
            <span className="ml-[3px] w-[107px] shrink-0 whitespace-nowrap">New Child Test Item</span>
            <GrayTool><FolderPlus size={24} /></GrayTool>
            <GrayTool><FolderPlus size={24} /></GrayTool>
            <GrayTool><FolderPlus size={24} /></GrayTool>
            <span className="ml-[5px]"><DarkSep /></span>
            <GrayTool w="w-[36px]"><Trash2 size={25} /></GrayTool>
            <DarkSep />
            <GrayTool w="w-[32px]"><Play size={24} /></GrayTool>
            <GrayTool w="w-[32px]"><FilePlus size={24} /></GrayTool>
            <span className="ml-[3px]"><DarkSep /></span>
            <span className="w-[3px]" />
            <GrayTool><ArrowUp size={26} strokeWidth={3} /></GrayTool>
            <GrayTool><ArrowDown size={26} strokeWidth={3} /></GrayTool>
            <GrayTool><ArrowLeft size={26} strokeWidth={3} /></GrayTool>
            <GrayTool><ArrowRight size={26} strokeWidth={3} /></GrayTool>
          </div>
          <div className="h-[272px] flex shrink-0">
            <div className="w-[940px] h-full border-2 border-[#6b7a90] flex overflow-hidden shrink-0">
              <div className="flex-1 min-w-0 overflow-hidden relative">
                <div className="h-[19px] flex items-center border-b border-[#3c4452] text-[#e4e7eb] whitespace-nowrap">
                  <span className="w-[471px] pl-[2px] shrink-0">Name</span>
                  <span className="w-[35px] shrink-0">Tes...</span>
                  <span className="w-[142px] shrink-0">Execution entity</span>
                  <span className="w-[62px] shrink-0">Parameters</span>
                  <span className="w-[32px] shrink-0">Co...</span>
                  <span className="w-[44px] shrink-0">Time...</span>
                  <span className="w-[38px] shrink-0">On ...</span>
                  <span className="w-[52px] shrink-0">Link to...</span>
                  <span>Envir...</span>
                </div>
                {gridRows.map((r, i) => <GridRow key={i} row={r} />)}
                <Guide x={9} top={19} h={250} />
                <Guide x={30} top={19} h={250} />
                <Guide x={52} top={19} h={250} />
                <Guide x={73} top={82} h={187} />
                <Guide x={94} top={103} h={166} />
                <Guide x={115} top={124} h={95} />
              </div>
              <div className="w-[15px] bg-[#222a38] shrink-0 flex flex-col items-center">
                <span className="mt-[6px] w-0 h-0 border-l-[4px] border-r-[4px] border-b-[5px] border-l-transparent border-r-transparent border-b-[#6e7682]" />
                <span className="mt-[160px] w-[8px] h-[78px] bg-[#6e7a90]" />
                <span className="mt-auto mb-[6px] w-0 h-0 border-l-[4px] border-r-[4px] border-t-[5px] border-l-transparent border-r-transparent border-t-[#6e7682]" />
              </div>
            </div>
            <div className="ml-[5px] w-[20px] h-[274px] bg-[#4d5866] flex flex-col items-center overflow-hidden shrink-0">
              <ChevronsLeft size={14} className="text-white mt-[4px] shrink-0" />
              <div className="mt-[3px] shrink-0 whitespace-nowrap [writing-mode:vertical-rl] rotate-180 font-bold text-[10.5px] tracking-normal text-[#e4e7eb] [font-family:'DejaVu_Sans',sans-serif]">
                Properties / Parallel Device Cloud Environment
              </div>
            </div>
          </div>

          <div className="h-[22px] w-[944px] mt-[8px] bg-[#4d5866] flex items-center pl-[6px] text-[#dde1e6] shrink-0">Call Stack</div>
          <div className="h-[125px] w-[944px] mt-px bg-[#141b24] border border-[#6b7a90] shrink-0">
            <div className="h-[19px] border-b border-[#3c4452] flex items-center pl-[2px] text-[#e4e7eb]">Call Stack</div>
          </div>
          <div className="flex shrink-0 mt-[3px] items-start">
            <div className="w-[61px] h-[30px] bg-[#4d5866] flex items-center justify-center text-[#e4e7eb]">Call Stack</div>
            <div className="h-[26px] flex bg-[#141b24] border-b border-[#4d5866]">
              <span className="w-[43px] flex items-center justify-center border-r border-[#4d5866]">Locals</span>
              <span className="w-[64px] flex items-center justify-center border-r border-[#4d5866]">Watch List</span>
              <span className="w-[69px] flex items-center justify-center">Breakpoints</span>
            </div>
          </div>
        </div>
      </div>

      {/* status bar */}
      <div className="h-[17px] flex items-stretch shrink-0 text-[10.5px] tracking-normal">
        <span className="w-[50px] border-r border-[#d5d8dc]" />
        <span className="w-[43px] border-r border-[#d5d8dc] flex items-center justify-center text-[#737a85]">CAPS</span>
        <span className="w-[39px] border-r border-[#d5d8dc] flex items-center justify-center text-[#e4e7eb]">NUM</span>
        <span className="w-[42px] border-r border-[#d5d8dc] flex items-center justify-center text-[#737a85]">SCRL</span>
        <span className="w-[43px] border-r border-[#d5d8dc] flex items-center justify-center text-[#e4e7eb]">OVR</span>
        <span className="w-[53px] border-r border-[#d5d8dc]" />
        <span className="w-[1090px] border-r border-[#d5d8dc]" />
      </div>

      {/* taskbar right */}
      <div className="h-[40px] shrink-0 bg-[#262626] flex items-center text-white pr-[6px] tracking-normal">
        <TaskbarIcons />
        <div className="ml-auto w-[58px] flex flex-col items-center gap-[6px] text-[11.5px] text-[#eee] [font-family:'Liberation_Sans',sans-serif]">
          <span>10:13</span>
          <span>02/06/2022</span>
        </div>
      </div>

      {/* floating runner widget */}
      <div className="absolute left-[1254px] top-[24px] w-[103px] h-[41px] bg-[#202733] border border-[#7b8aa1] flex items-center pl-[4px]">
        <TcLogo size={29} />
        <span className="ml-[5px] w-px h-[34px] bg-[#4d5866]" />
        <div className="ml-[9px] flex gap-[2px]">
          <span className="w-[7px] h-[17px] bg-[#00a8ff] rounded-[1px]" />
          <span className="w-[7px] h-[17px] bg-[#00a8ff] rounded-[1px]" />
        </div>
        <div className="ml-[4px] w-[27px] h-[27px] bg-[#3a4a63] flex items-center justify-center">
          <span className="w-[16px] h-[16px] bg-[#00a8ff]" />
        </div>
        <svg width="14" height="20" viewBox="0 0 14 20" className="absolute left-[82px] top-[22px]">
          <path d="M1 1l11 11H7l3 6-2 1-3-6-4 4z" fill="#fff" stroke="#000" />
        </svg>
      </div>
      <div className="absolute left-[1248px] top-[68px] w-[109px] h-[39px] bg-[#202733] border border-[#7b8aa1] text-[#cfd4db] px-[6px]">
        <div className="h-[18px] flex items-center justify-end border-b border-[#7b8aa1] pt-[2px]">Stopping...</div>
        <div className="h-[18px] flex items-center whitespace-nowrap">RH <span className="mx-[3px] w-px h-[12px] bg-[#e08a40]" /> Executa SEFIP</div>
      </div>
    </div>
  )
}

export default function App() {
  return (
    <div className="w-[2966px] h-[900px] bg-black flex overflow-hidden">
      <LeftWindow />
      <RightWindow />
    </div>
  )
}
